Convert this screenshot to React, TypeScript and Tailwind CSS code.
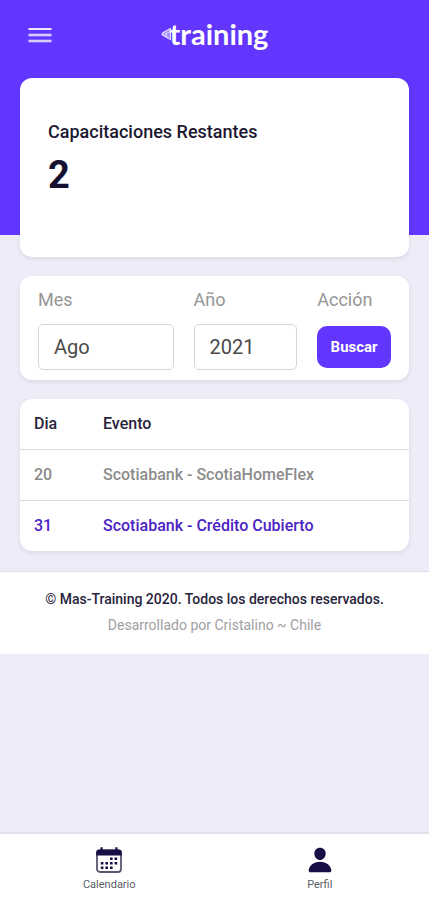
import React from 'react';
import { IoPerson } from 'react-icons/io5';

interface EventRow {
  day: string;
  name: string;
  active: boolean;
}

const events: EventRow[] = [
  { day: '20', name: 'Scotiabank - ScotiaHomeFlex', active: false },
  { day: '31', name: 'Scotiabank - Crédito Cubierto', active: true }
];

const cardClass = 'rounded-xl bg-white shadow-[0_2px_5px_rgba(0,0,0,0.08)]';
const labelClass = 'block text-lg leading-6 text-[#969696]';
const selectClass =
  'block h-[46px] w-full appearance-none rounded-[5px] border border-[#d6d6d6] bg-white px-[15px] text-xl text-[#4a4a4a]';

const MenuIcon = () => (
  <svg className="h-4 w-6" viewBox="0 0 24 16" fill="none" strokeWidth="2" aria-hidden="true">
    <path d="M0.5 2H23.5" stroke="#efe9ff" />
    <path d="M0.5 8H23.5" stroke="#d8ccff" strokeWidth="2.6" />
    <path d="M0.5 14H23.5" stroke="#d8ccff" strokeWidth="2.6" />
  </svg>
);

const LogoMark = () => (
  <svg className="-mr-px h-[14px] w-[10px]" viewBox="0 0 10 14" fill="none" strokeLinejoin="round" aria-hidden="true">
    <path d="M9.5 1.5L1.6 6.2Q0.6 7 1.6 7.8L9.5 12.5z" fill="#9b84ff" stroke="#e5ddff" strokeWidth="1.4" />
    <path d="M3.5 7.5L9 4.5M5.5 10V6.5" stroke="#e5ddff" strokeWidth="1" />
  </svg>
);

const CalendarIcon = () => (
  <svg className="h-7 w-7" viewBox="0 0 28 28" fill="#160f45" aria-hidden="true">
    <rect x="2" y="4.5" width="24" height="21.5" rx="3" fill="none" stroke="#5a5670" strokeWidth="1.8" />
    <path d="M1.2 9.6V6.5a3 3 0 0 1 3-3H5.5V1.3h2.2v2.2h12.6V1.3h2.2v2.2h1.3a3 3 0 0 1 3 3v3.1z" />
    <path d="M15 11.5h2.6V14H15zM19.6 11.5h2.6V14h-2.6zM5.8 16h2.6v2.5H5.8zM10.4 16H13v2.5h-2.6zM15 16h2.6v2.5H15zM19.6 16h2.6v2.5h-2.6zM5.8 20.5h2.6V23H5.8zM10.4 20.5H13V23h-2.6zM15 20.5h2.6V23H15z" />
  </svg>
);

const Header = () => (
  <div className="bg-[#6236ff] px-5">
    <header className="grid h-[78px] grid-cols-3 items-start pt-[18px]">
      <button type="button" aria-label="Menú" className="ml-2 flex h-[34px] w-6 items-center">
        <MenuIcon />
      </button>
      <a href="#" className="flex h-8 items-center justify-center text-white">
        <LogoMark />
        <span className="font-['Lato',sans-serif] text-[29px] leading-8 font-bold">training</span>
      </a>
    </header>
    <section className={`${cardClass} relative -mb-[22px] h-[179px] px-7 pt-[42px]`}>
      <h2 className="text-lg leading-6 font-medium text-[#1c1832]">Capacitaciones Restantes</h2>
      <p className="mt-1 text-[38px] leading-[54px] font-bold text-[#141030]">2</p>
    </section>
  </div>
);

const SearchForm = () => (
  <form
    className={`${cardClass} grid grid-cols-[136fr_104fr_74fr] gap-5 px-[18px] pt-3 pb-[10px]`}
    onSubmit={(e) => e.preventDefault()}
  >
    <div className="flex flex-col gap-3">
      <label htmlFor="month" className={labelClass}>Mes</label>
      <select id="month" className={selectClass}>
        <option>Ago</option>
      </select>
    </div>
    <div className="flex flex-col gap-3">
      <label htmlFor="year" className={labelClass}>Año</label>
      <select id="year" className={selectClass}>
        <option>2021</option>
      </select>
    </div>
    <div className="flex flex-col gap-3">
      <span className={labelClass}>Acción</span>
      <button type="submit" className="mt-[2px] h-[42px] w-full rounded-[10px] bg-[#6236ff] text-[15px] font-bold text-white">
        Buscar
      </button>
    </div>
  </form>
);

const EventTable = () => (
  <div className={`${cardClass} overflow-hidden`}>
    <table className="w-full text-left text-base">
      <thead>
        <tr className="h-[50px] text-[#28243c]">
          <th className="w-[83px] pl-[14px] font-medium">Dia</th>
          <th className="font-medium">Evento</th>
        </tr>
      </thead>
      <tbody>
        {events.map((event) => (
          <tr
            key={event.day}
            className={`h-[51px] border-t border-[#dcdce0] font-medium ${event.active ? 'text-[#4a22c4]' : 'text-[#8c8c8c]'}`}
          >
            <td className="pl-[14px]">{event.day}</td>
            <td>{event.name}</td>
          </tr>
        ))}
      </tbody>
    </table>
  </div>
);

const tabClass = 'flex flex-1 flex-col items-center gap-[3px] pt-3 text-[11px] leading-4 text-[#5c5c66]';

export default function App() {
  return (
    <div className="flex min-h-screen flex-col bg-[#edecf8] font-['Roboto',sans-serif]">
      <Header />
      <main className="mt-[41px] flex flex-col gap-[19px] px-5">
        <SearchForm />
        <EventTable />
      </main>
      <footer className="mt-5 border-t border-[#dddce8] bg-white pt-[14px] pb-4 text-center text-sm leading-[26px]">
        <p className="font-medium text-[#28243c]">© Mas-Training 2020. Todos los derechos reservados.</p>
        <p className="text-[#a0a0a4]">Desarrollado por Cristalino ~ Chile</p>
      </footer>
      <nav className="sticky bottom-0 mt-auto flex h-[68px] border-t-2 border-[#e0dfea] bg-white px-1">
        <a href="#" className={tabClass}>
          <CalendarIcon />
          Calendario
        </a>
        <a href="#" className={tabClass}>
          <IoPerson className="h-7 w-7 text-[#160f45]" />
          Perfil
        </a>
      </nav>
    </div>
  );
}
